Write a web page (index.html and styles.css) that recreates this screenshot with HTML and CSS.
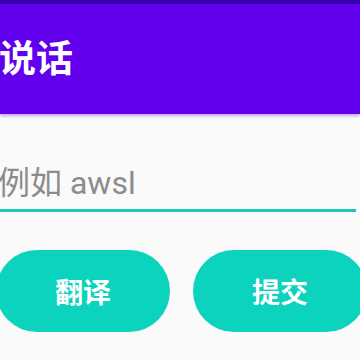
FILE: index.html
```html
<!DOCTYPE html>
<html lang="zh">
<head>
  <meta charset="UTF-8">
  <meta name="viewport" content="width=device-width, initial-scale=1.0">
  <title>说话</title>
  <link rel="stylesheet" href="styles.css">
</head>
<body>

  <div class="status-bar"></div>

  <div class="app-bar">
    <h1 class="title">说话</h1>
  </div>

  <div class="content">
    <input type="text" class="text-input" placeholder="例如 awsl">

    <div class="button-row">
      <button class="button">翻译</button>
      <button class="button">提交</button>
    </div>
  </div>

</body>
</html>
```

FILE: styles.css
```css
body {
  font-family: Roboto, "Noto Sans CJK SC", sans-serif;
  margin: 0;
  padding: 0;
  background-color: #fafafa;
  width: 360px;
  height: 360px;
  overflow: hidden;
}

.status-bar {
  height: 4px;
  background-color: #3700b3;
}

.app-bar {
  height: 110px;
  background-color: #6200ee;
  display: flex;
  align-items: center;
  box-shadow: 0 2px 3px rgba(98, 0, 238, 0.35);
  position: relative;
}

.title {
  margin: 0 0 0 -1px;
  color: white;
  font-size: 37px;
  font-weight: bold;
  line-height: 1;
}

.content {
  padding-top: 45px;
}

.text-input {
  display: block;
  box-sizing: border-box;
  width: 358px;
  height: 53px;
  margin: 0 0 0 -2px;
  padding: 0 0 3px 0;
  border: none;
  border-bottom: 3px solid #1ec8b8;
  background: transparent;
  font-family: Roboto, "Noto Sans CJK SC", sans-serif;
  font-size: 32px;
  color: #222;
  outline: none;
}

.text-input::placeholder {
  color: #8c8c8c;
}

.button-row {
  display: flex;
  gap: 23px;
  margin-top: 38px;
  margin-left: -4px;
}

.button {
  flex: none;
  width: 174px;
  height: 82px;
  border: none;
  border-radius: 41px;
  background-color: #0bd3be;
  color: white;
  font-family: Roboto, "Noto Sans CJK SC", sans-serif;
  font-size: 28px;
  font-weight: bold;
  cursor: pointer;
}
```
